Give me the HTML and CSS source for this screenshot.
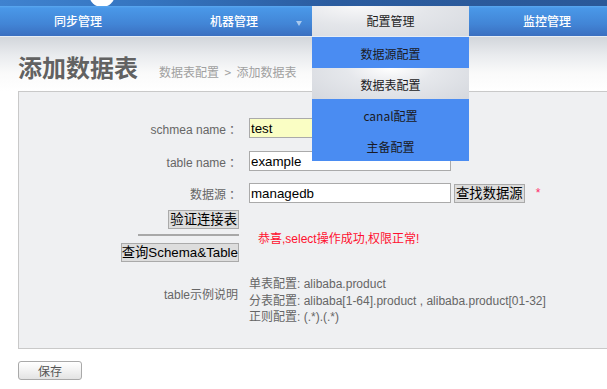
FILE: index.html
```html
<!DOCTYPE html>
<html lang="zh-CN">
<head>
<meta charset="utf-8">
<title>添加数据表</title>
<link rel="stylesheet" href="styles.css">
</head>
<body>
<div class="banner">
  <span class="logo"></span>
</div>
<nav class="nav">
  <div class="nav-item">同步管理</div>
  <div class="nav-item">机器管理<span class="caret"></span></div>
  <div class="nav-item active">配置管理
    <ul class="dropdown">
      <li>数据源配置</li>
      <li class="hover">数据表配置</li>
      <li>canal配置</li>
      <li>主备配置</li>
    </ul>
  </div>
  <div class="nav-item">监控管理</div>
</nav>
<div class="page">
  <div class="title-row">
    <h1 class="title">添加数据表</h1>
    <span class="crumb">数据表配置 &nbsp;&gt;&nbsp; 添加数据表</span>
  </div>
  <div class="form-box">
    <div class="row">
      <label class="label">schmea name<span class="colon">：</span></label>
      <div class="field"><input class="input input-yellow" type="text" value="test"></div>
    </div>
    <div class="row">
      <label class="label">table name<span class="colon">：</span></label>
      <div class="field"><input class="input" type="text" value="example"><span class="star">*</span></div>
    </div>
    <div class="row">
      <label class="label">数据源<span class="colon">：</span></label>
      <div class="field"><input class="input" type="text" value="managedb"><button class="btn btn-find">查找数据源</button><span class="star">*</span></div>
    </div>
    <div class="row row-check">
      <div class="check-col">
        <button class="btn">验证连接表</button>
        <hr class="sep">
        <button class="btn">查询Schema&amp;Table</button>
      </div>
      <div class="msg">恭喜,select操作成功,权限正常!</div>
    </div>
    <div class="row row-example">
      <div class="label label-example">table示例说明</div>
      <div class="examples">
        <div>单表配置: alibaba.product</div>
        <div>分表配置: alibaba[1-64].product , alibaba.product[01-32]</div>
        <div>正则配置: (.*).(.*)</div>
      </div>
    </div>
  </div>
  <button class="save">保存</button>
</div>
</body>
</html>
```

FILE: styles.css
```css
* { box-sizing: border-box; }
html, body { margin: 0; padding: 0; }
body {
  width: 607px;
  height: 389px;
  overflow: hidden;
  background: #ffffff;
  font-family: "Liberation Sans", "Noto Sans CJK SC", sans-serif;
  font-size: 12px;
  color: #666;
}

.banner {
  height: 6px;
  overflow: hidden;
  display: flex;
  align-items: flex-end;
  background: linear-gradient(90deg, #3f82cf 0%, #3474bf 25%, #2b5c9f 55%, #2a5898 100%);
  padding-left: 89px;
}
.logo {
  flex: none;
  width: 26px;
  height: 26px;
  border-radius: 50%;
  background: #ffffff;
  margin-bottom: -1px;
}

.nav {
  display: flex;
  height: 31px;
  background: linear-gradient(180deg, #5aa8f0 0px, #4a98e8 2px, #4285d6 18px, #3a6fc0 30px, #e6edf5 30px, #e6edf5 31px);
}
.nav-item {
  position: relative;
  flex: none;
  width: 156px;
  height: 30px;
  line-height: 30px;
  text-align: center;
  color: #ffffff;
  font-family: "Noto Sans CJK SC", sans-serif;
  font-size: 12px;
  font-weight: 500;
}
.nav-item.active {
  width: 157px;
  color: #1e1e1e;
  font-weight: 400;
  background: radial-gradient(ellipse at 30% 0%, #f8f8f9 0%, #e4e6ea 45%, #d6d9df 100%);
}
.caret {
  position: absolute;
  right: 10px;
  top: 15px;
  width: 0;
  height: 0;
  border-left: 3px solid transparent;
  border-right: 3px solid transparent;
  border-top: 5px solid #a9c9ee;
}
.dropdown {
  position: absolute;
  top: 31px;
  left: 0;
  width: 157px;
  margin: 0;
  padding: 0;
  list-style: none;
  background: #4a8cf2;
  z-index: 5;
}
.dropdown li {
  height: 31px;
  padding-top: 3px;
  line-height: 28px;
  text-align: center;
  color: #1a1a24;
  font-size: 12px;
  font-weight: 400;
}
.dropdown li.hover {
  background: radial-gradient(ellipse at 50% 0%, #ffffff 0%, #e6e8ec 40%, #d5d8de 100%);
}

.page {
  padding-left: 18px;
  background: linear-gradient(180deg, #d2d6db 0px, #e9ebee 18px, #fafafa 36px, #ffffff 54px);
}
.title-row {
  display: flex;
  align-items: baseline;
  height: 54px;
  padding-top: 15px;
}
.title {
  margin: 0;
  font-family: "Noto Sans CJK SC", sans-serif;
  font-size: 24px;
  line-height: 30px;
  font-weight: 700;
  color: #626262;
  text-shadow: 0 1px 0 #ffffff;
}
.crumb {
  margin-left: 21px;
  font-family: "Noto Sans CJK SC", sans-serif;
  font-size: 12px;
  color: #a0a0a0;
  white-space: pre;
}

.form-box {
  height: 258px;
  border: 1px solid #c9c9c9;
  border-right: none;
  background: #eff0f2;
  padding-top: 26px;
}
.row {
  display: flex;
  align-items: center;
  margin-bottom: 13px;
}
.row:nth-child(2) { margin-bottom: 12px; }
.row:nth-child(3) { margin-bottom: 7px; }
.label {
  flex: none;
  width: 220px;
  text-align: right;
  padding-right: 1px;
  color: #666;
  font-size: 12px;
}
.colon {
  margin-left: 3px;
  margin-right: -3px;
}
.field {
  display: flex;
  align-items: center;
  margin-left: 10px;
}
.input {
  width: 202px;
  height: 20px;
  border: 1px solid #aaaaaa;
  padding: 0 1px;
  margin: 0;
  background: #ffffff;
  font-family: "Liberation Sans", sans-serif;
  font-size: 13.33px;
  color: #000;
  outline: none;
}
.input-yellow { background: #fafec4; }
.star {
  margin-left: 11px;
  color: #ff2a6a;
  font-size: 12px;
  line-height: 12px;
}
.btn {
  height: 19px;
  margin: 0;
  padding: 0 1px;
  border: 1px solid #aaaaaa;
  background: #dddddd;
  color: #000;
  font-family: "Liberation Sans", "Noto Sans CJK SC", sans-serif;
  font-size: 13.33px;
  line-height: 17px;
}
.btn-find { margin-left: 3px; }

.row-check { align-items: center; margin-bottom: 14px; }
.check-col {
  flex: none;
  width: 220px;
  display: flex;
  flex-direction: column;
  align-items: flex-end;
}
.check-col .btn:last-child { padding: 0; }
.sep {
  width: 101px;
  height: 0;
  margin: 5px 0 7px 0;
  border: none;
  border-top: 2px solid #a8a8a8;
  align-self: flex-end;
}
.msg {
  margin-left: 19px;
  margin-top: 2px;
  color: #ff1030;
  font-size: 12px;
}

.row-example { align-items: flex-start; }
.label-example { padding-top: 9px; }
.examples {
  margin-left: 10px;
  line-height: 16.5px;
  color: #666;
  font-size: 12px;
}

.save {
  display: block;
  margin-top: 12px;
  width: 64px;
  height: 19px;
  padding: 0;
  border: 1px solid #a9a9a9;
  border-radius: 3px;
  background: linear-gradient(180deg, #ffffff 0%, #f2f2f2 50%, #e3e3e3 100%);
  color: #555;
  font-family: "Noto Sans CJK SC", sans-serif;
  font-size: 12px;
  line-height: 17px;
}
```
